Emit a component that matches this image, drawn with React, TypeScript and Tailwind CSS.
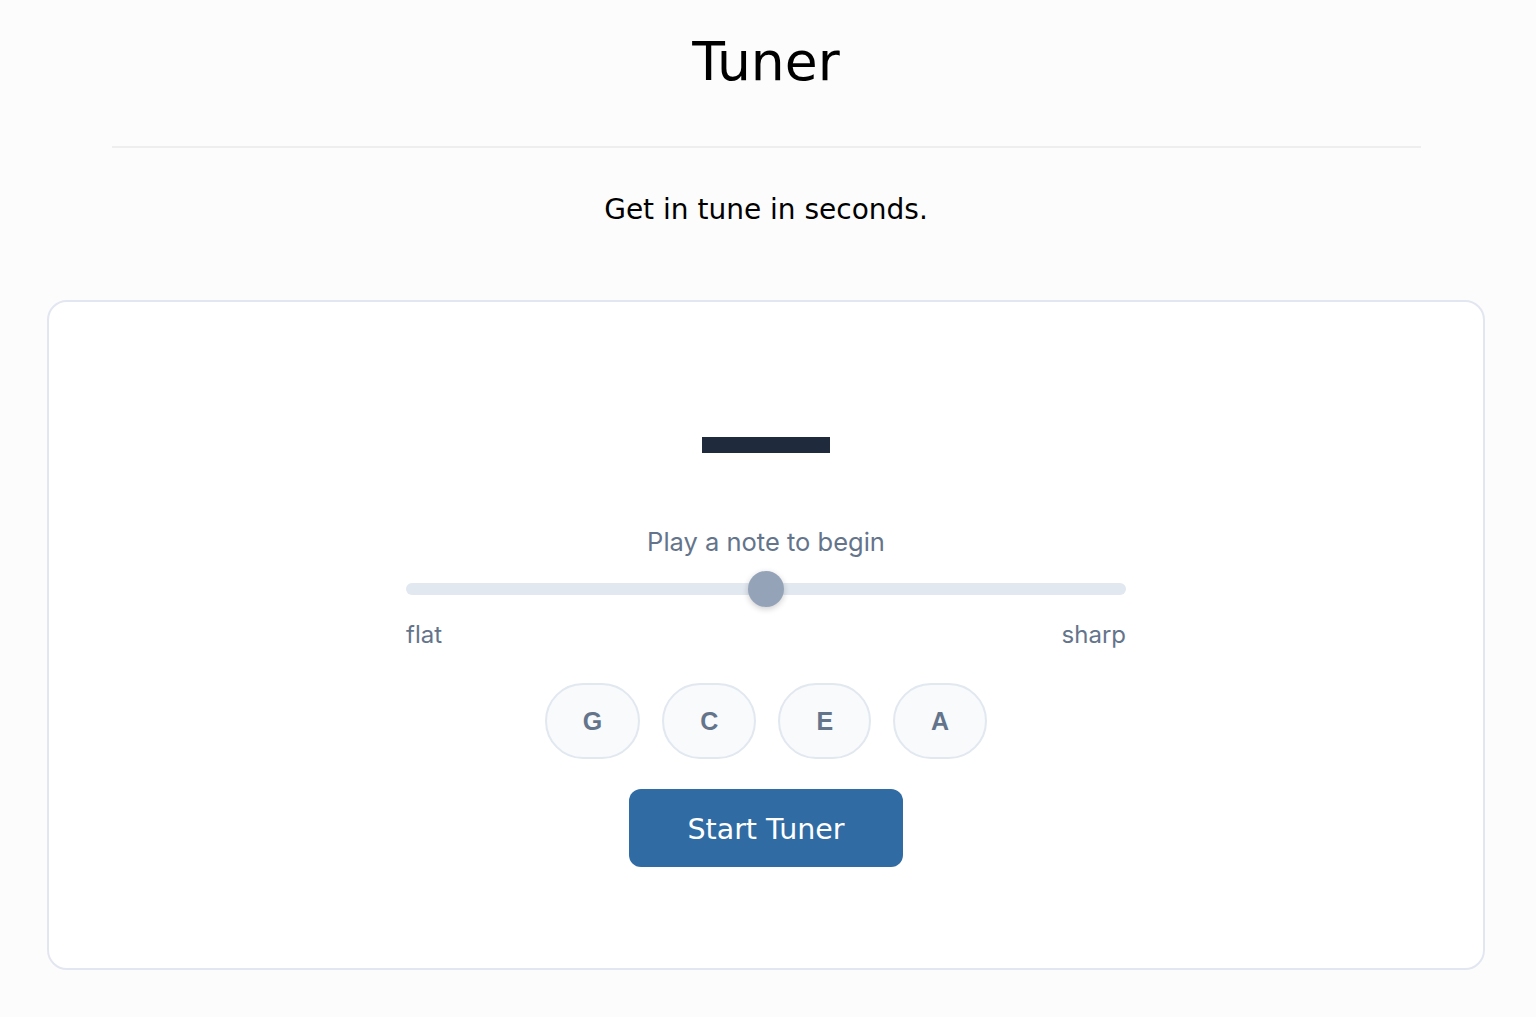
import React, { useState } from "react";

const notes = ["G", "C", "E", "A"];

const App: React.FC = () => {
  const [active, setActive] = useState<string | null>(null);

  return (
    <div className="min-h-screen bg-[#fcfcfc] pl-[47px] pr-[51px] font-['DejaVu_Sans',sans-serif]">
      <header className="flex flex-col items-center">
        <h1 className="pt-[30px] text-[53.5px] leading-[64px] text-black">Tuner</h1>
        <hr className="mt-[52px] w-[1309px] border-t-2 border-[#eeeeee]" />
        <p className="mt-[45px] text-[28px] leading-[34px] text-black">Get in tune in seconds.</p>
      </header>

      <main className="mt-[73px] flex h-[670px] flex-col items-center rounded-[20px] border-2 border-[#e2e6f0] bg-white">
        <div className="mt-[135px] h-[16px] w-[128px] bg-[#1f2a3c]" />

        <p className="mt-[74px] font-['Inter',sans-serif] text-[25.5px] leading-[30px] text-[#64748b]">
          Play a note to begin
        </p>

        <div className="relative mt-[26px] h-[12px] w-[720px] rounded-full bg-[#e2e8f0]">
          <div className="absolute left-[342px] top-[-12px] h-[36px] w-[36px] rounded-full bg-[#94a3b8] shadow-[0_2px_6px_rgba(0,0,0,0.2)]" />
        </div>

        <div className="mt-[26px] flex w-[720px] justify-between font-['Inter',sans-serif] text-[24px] leading-[28px] text-[#64748b]">
          <span>flat</span>
          <span>sharp</span>
        </div>

        <div className="mt-[34px] flex gap-[22px]">
          {notes.map((n) => (
            <button
              key={n}
              onClick={() => setActive(n)}
              className={`h-[76px] rounded-full border-2 border-[#e2e8f0] bg-[#f8fafc] px-[36px] pt-[2px] font-['Liberation_Sans',sans-serif] text-[25px] font-bold text-[#64748b] ${active === n ? "ring-2 ring-[#306ba4]" : ""}`}
            >
              {n}
            </button>
          ))}
        </div>

        <button className="mt-[30px] h-[78px] w-[274px] rounded-[12px] bg-[#306ba4] pt-[4px] text-[28.5px] text-white">
          Start Tuner
        </button>
      </main>
    </div>
  );
};

export default App;
